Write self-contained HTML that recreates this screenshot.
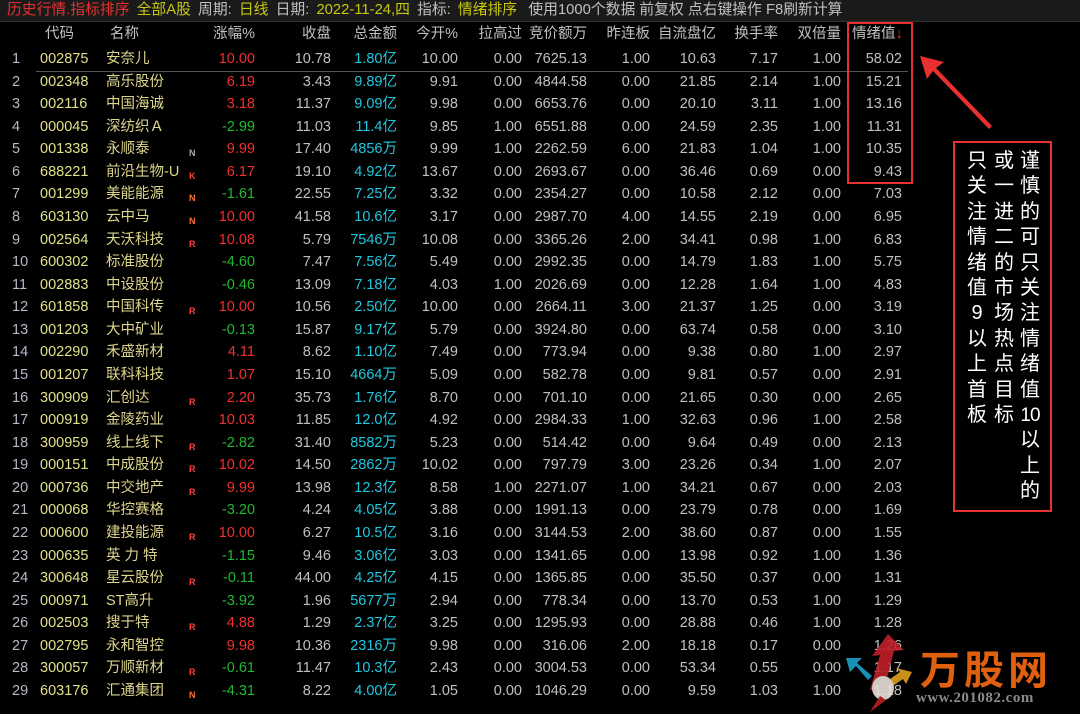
<!DOCTYPE html>
<html><head><meta charset="utf-8"><style>
body{margin:0;width:1080px;height:714px;background:#000;overflow:hidden;position:relative;font-family:"Liberation Sans","Noto Sans CJK SC",sans-serif;font-size:14.5px;color:#c0c0c0}
.tb{position:absolute;left:0;top:0;width:1080px;height:22px;background:#1a1a1a;border-bottom:1px solid #333;white-space:nowrap;line-height:21px;padding-left:7px;box-sizing:border-box;font-size:14.8px}
.tb span{margin-right:3px}
.rd{color:#e83030}.yl{color:#c8c810}
.r{position:absolute;left:0;width:1080px;height:22px;line-height:22px;white-space:nowrap}
.r span{position:absolute;top:0}
.i{left:12px;color:#b8b8c8}
.c{left:40px;color:#e0e08a}
.n{left:106px;color:#ddd58c}
.m{left:189px;font-size:9px;font-weight:bold;top:4px!important}
.mg{color:#a8a8a8}.mr{color:#ff4040}.mo{color:#ff7030}
.a{right:825px;text-align:right}
.b{right:749px;text-align:right}
.d{right:683px;text-align:right;color:#20c8e0}
.e{right:622px;text-align:right}
.f{right:558px;text-align:right}
.g{right:493px;text-align:right}
.h{right:430px;text-align:right}
.j{right:364px;text-align:right}
.k{right:302px;text-align:right}
.l{right:239px;text-align:right}
.o{right:178px;text-align:right}
.up{color:#f03030}.dn{color:#20b830}
.hd{color:#c0c0c0}
.vt{position:absolute;top:149px;width:28px;text-align:center;color:#fff;font-size:20px;line-height:25.4px}
</style></head><body>
<div class="tb"><span class="rd">历史行情.指标排序</span> <span class="yl">全部A股</span> <span>周期:</span> <span class="yl">日线</span> <span>日期:</span> <span class="yl">2022-11-24,四</span> <span>指标:</span> <span class="yl">情绪排序</span> &nbsp;<span>使用1000个数据 前复权 点右键操作 F8刷新计算</span></div>

<div class="r hd" style="top:23px"><span style="left:45px">代码</span><span style="left:110px">名称</span><span class="a">涨幅%</span><span class="b">收盘</span><span class="d" style="color:#c0c0c0">总金额</span><span class="e">今开%</span><span class="f">拉高过</span><span class="g">竞价额万</span><span class="h">昨连板</span><span class="j">自流盘亿</span><span class="k">换手率</span><span class="l">双倍量</span><span style="left:852px">情绪值<span style="position:static;color:#ff2020">↓</span></span></div>

<div style="position:absolute;left:36px;top:71px;width:872px;height:1px;background:#555"></div>

<div class="r" style="top:48px"><span class="i">1</span><span class="c">002875</span><span class="n">安奈儿</span><span class="a up">10.00</span><span class="b">10.78</span><span class="d">1.80亿</span><span class="e">10.00</span><span class="f">0.00</span><span class="g">7625.13</span><span class="h">1.00</span><span class="j">10.63</span><span class="k">7.17</span><span class="l">1.00</span><span class="o">58.02</span></div>
<div class="r" style="top:70.6px"><span class="i">2</span><span class="c">002348</span><span class="n">高乐股份</span><span class="a up">6.19</span><span class="b">3.43</span><span class="d">9.89亿</span><span class="e">9.91</span><span class="f">0.00</span><span class="g">4844.58</span><span class="h">0.00</span><span class="j">21.85</span><span class="k">2.14</span><span class="l">1.00</span><span class="o">15.21</span></div>
<div class="r" style="top:93.1px"><span class="i">3</span><span class="c">002116</span><span class="n">中国海诚</span><span class="a up">3.18</span><span class="b">11.37</span><span class="d">9.09亿</span><span class="e">9.98</span><span class="f">0.00</span><span class="g">6653.76</span><span class="h">0.00</span><span class="j">20.10</span><span class="k">3.11</span><span class="l">1.00</span><span class="o">13.16</span></div>
<div class="r" style="top:115.7px"><span class="i">4</span><span class="c">000045</span><span class="n">深纺织Ａ</span><span class="a dn">-2.99</span><span class="b">11.03</span><span class="d">11.4亿</span><span class="e">9.85</span><span class="f">1.00</span><span class="g">6551.88</span><span class="h">0.00</span><span class="j">24.59</span><span class="k">2.35</span><span class="l">1.00</span><span class="o">11.31</span></div>
<div class="r" style="top:138.3px"><span class="i">5</span><span class="c">001338</span><span class="n">永顺泰</span><span class="m mg">N</span><span class="a up">9.99</span><span class="b">17.40</span><span class="d">4856万</span><span class="e">9.99</span><span class="f">1.00</span><span class="g">2262.59</span><span class="h">6.00</span><span class="j">21.83</span><span class="k">1.04</span><span class="l">1.00</span><span class="o">10.35</span></div>
<div class="r" style="top:160.9px"><span class="i">6</span><span class="c">688221</span><span class="n">前沿生物-U</span><span class="m mr">K</span><span class="a up">6.17</span><span class="b">19.10</span><span class="d">4.92亿</span><span class="e">13.67</span><span class="f">0.00</span><span class="g">2693.67</span><span class="h">0.00</span><span class="j">36.46</span><span class="k">0.69</span><span class="l">0.00</span><span class="o">9.43</span></div>
<div class="r" style="top:183.4px"><span class="i">7</span><span class="c">001299</span><span class="n">美能能源</span><span class="m mo">N</span><span class="a dn">-1.61</span><span class="b">22.55</span><span class="d">7.25亿</span><span class="e">3.32</span><span class="f">0.00</span><span class="g">2354.27</span><span class="h">0.00</span><span class="j">10.58</span><span class="k">2.12</span><span class="l">0.00</span><span class="o">7.03</span></div>
<div class="r" style="top:206px"><span class="i">8</span><span class="c">603130</span><span class="n">云中马</span><span class="m mo">N</span><span class="a up">10.00</span><span class="b">41.58</span><span class="d">10.6亿</span><span class="e">3.17</span><span class="f">0.00</span><span class="g">2987.70</span><span class="h">4.00</span><span class="j">14.55</span><span class="k">2.19</span><span class="l">0.00</span><span class="o">6.95</span></div>
<div class="r" style="top:228.6px"><span class="i">9</span><span class="c">002564</span><span class="n">天沃科技</span><span class="m mr">R</span><span class="a up">10.08</span><span class="b">5.79</span><span class="d">7546万</span><span class="e">10.08</span><span class="f">0.00</span><span class="g">3365.26</span><span class="h">2.00</span><span class="j">34.41</span><span class="k">0.98</span><span class="l">1.00</span><span class="o">6.83</span></div>
<div class="r" style="top:251.1px"><span class="i">10</span><span class="c">600302</span><span class="n">标准股份</span><span class="a dn">-4.60</span><span class="b">7.47</span><span class="d">7.56亿</span><span class="e">5.49</span><span class="f">0.00</span><span class="g">2992.35</span><span class="h">0.00</span><span class="j">14.79</span><span class="k">1.83</span><span class="l">1.00</span><span class="o">5.75</span></div>
<div class="r" style="top:273.7px"><span class="i">11</span><span class="c">002883</span><span class="n">中设股份</span><span class="a dn">-0.46</span><span class="b">13.09</span><span class="d">7.18亿</span><span class="e">4.03</span><span class="f">1.00</span><span class="g">2026.69</span><span class="h">0.00</span><span class="j">12.28</span><span class="k">1.64</span><span class="l">1.00</span><span class="o">4.83</span></div>
<div class="r" style="top:296.3px"><span class="i">12</span><span class="c">601858</span><span class="n">中国科传</span><span class="m mr">R</span><span class="a up">10.00</span><span class="b">10.56</span><span class="d">2.50亿</span><span class="e">10.00</span><span class="f">0.00</span><span class="g">2664.11</span><span class="h">3.00</span><span class="j">21.37</span><span class="k">1.25</span><span class="l">0.00</span><span class="o">3.19</span></div>
<div class="r" style="top:318.8px"><span class="i">13</span><span class="c">001203</span><span class="n">大中矿业</span><span class="a dn">-0.13</span><span class="b">15.87</span><span class="d">9.17亿</span><span class="e">5.79</span><span class="f">0.00</span><span class="g">3924.80</span><span class="h">0.00</span><span class="j">63.74</span><span class="k">0.58</span><span class="l">0.00</span><span class="o">3.10</span></div>
<div class="r" style="top:341.4px"><span class="i">14</span><span class="c">002290</span><span class="n">禾盛新材</span><span class="a up">4.11</span><span class="b">8.62</span><span class="d">1.10亿</span><span class="e">7.49</span><span class="f">0.00</span><span class="g">773.94</span><span class="h">0.00</span><span class="j">9.38</span><span class="k">0.80</span><span class="l">1.00</span><span class="o">2.97</span></div>
<div class="r" style="top:364px"><span class="i">15</span><span class="c">001207</span><span class="n">联科科技</span><span class="a up">1.07</span><span class="b">15.10</span><span class="d">4664万</span><span class="e">5.09</span><span class="f">0.00</span><span class="g">582.78</span><span class="h">0.00</span><span class="j">9.81</span><span class="k">0.57</span><span class="l">0.00</span><span class="o">2.91</span></div>
<div class="r" style="top:386.6px"><span class="i">16</span><span class="c">300909</span><span class="n">汇创达</span><span class="m mr">R</span><span class="a up">2.20</span><span class="b">35.73</span><span class="d">1.76亿</span><span class="e">8.70</span><span class="f">0.00</span><span class="g">701.10</span><span class="h">0.00</span><span class="j">21.65</span><span class="k">0.30</span><span class="l">0.00</span><span class="o">2.65</span></div>
<div class="r" style="top:409.1px"><span class="i">17</span><span class="c">000919</span><span class="n">金陵药业</span><span class="a up">10.03</span><span class="b">11.85</span><span class="d">12.0亿</span><span class="e">4.92</span><span class="f">0.00</span><span class="g">2984.33</span><span class="h">1.00</span><span class="j">32.63</span><span class="k">0.96</span><span class="l">1.00</span><span class="o">2.58</span></div>
<div class="r" style="top:431.7px"><span class="i">18</span><span class="c">300959</span><span class="n">线上线下</span><span class="m mr">R</span><span class="a dn">-2.82</span><span class="b">31.40</span><span class="d">8582万</span><span class="e">5.23</span><span class="f">0.00</span><span class="g">514.42</span><span class="h">0.00</span><span class="j">9.64</span><span class="k">0.49</span><span class="l">0.00</span><span class="o">2.13</span></div>
<div class="r" style="top:454.3px"><span class="i">19</span><span class="c">000151</span><span class="n">中成股份</span><span class="m mr">R</span><span class="a up">10.02</span><span class="b">14.50</span><span class="d">2862万</span><span class="e">10.02</span><span class="f">0.00</span><span class="g">797.79</span><span class="h">3.00</span><span class="j">23.26</span><span class="k">0.34</span><span class="l">1.00</span><span class="o">2.07</span></div>
<div class="r" style="top:476.8px"><span class="i">20</span><span class="c">000736</span><span class="n">中交地产</span><span class="m mr">R</span><span class="a up">9.99</span><span class="b">13.98</span><span class="d">12.3亿</span><span class="e">8.58</span><span class="f">1.00</span><span class="g">2271.07</span><span class="h">1.00</span><span class="j">34.21</span><span class="k">0.67</span><span class="l">0.00</span><span class="o">2.03</span></div>
<div class="r" style="top:499.4px"><span class="i">21</span><span class="c">000068</span><span class="n">华控赛格</span><span class="a dn">-3.20</span><span class="b">4.24</span><span class="d">4.05亿</span><span class="e">3.88</span><span class="f">0.00</span><span class="g">1991.13</span><span class="h">0.00</span><span class="j">23.79</span><span class="k">0.78</span><span class="l">0.00</span><span class="o">1.69</span></div>
<div class="r" style="top:522px"><span class="i">22</span><span class="c">000600</span><span class="n">建投能源</span><span class="m mr">R</span><span class="a up">10.00</span><span class="b">6.27</span><span class="d">10.5亿</span><span class="e">3.16</span><span class="f">0.00</span><span class="g">3144.53</span><span class="h">2.00</span><span class="j">38.60</span><span class="k">0.87</span><span class="l">0.00</span><span class="o">1.55</span></div>
<div class="r" style="top:544.5px"><span class="i">23</span><span class="c">000635</span><span class="n">英 力 特</span><span class="a dn">-1.15</span><span class="b">9.46</span><span class="d">3.06亿</span><span class="e">3.03</span><span class="f">0.00</span><span class="g">1341.65</span><span class="h">0.00</span><span class="j">13.98</span><span class="k">0.92</span><span class="l">1.00</span><span class="o">1.36</span></div>
<div class="r" style="top:567.1px"><span class="i">24</span><span class="c">300648</span><span class="n">星云股份</span><span class="m mr">R</span><span class="a dn">-0.11</span><span class="b">44.00</span><span class="d">4.25亿</span><span class="e">4.15</span><span class="f">0.00</span><span class="g">1365.85</span><span class="h">0.00</span><span class="j">35.50</span><span class="k">0.37</span><span class="l">0.00</span><span class="o">1.31</span></div>
<div class="r" style="top:589.7px"><span class="i">25</span><span class="c">000971</span><span class="n">ST高升</span><span class="a dn">-3.92</span><span class="b">1.96</span><span class="d">5677万</span><span class="e">2.94</span><span class="f">0.00</span><span class="g">778.34</span><span class="h">0.00</span><span class="j">13.70</span><span class="k">0.53</span><span class="l">1.00</span><span class="o">1.29</span></div>
<div class="r" style="top:612.3px"><span class="i">26</span><span class="c">002503</span><span class="n">搜于特</span><span class="m mr">R</span><span class="a up">4.88</span><span class="b">1.29</span><span class="d">2.37亿</span><span class="e">3.25</span><span class="f">0.00</span><span class="g">1295.93</span><span class="h">0.00</span><span class="j">28.88</span><span class="k">0.46</span><span class="l">1.00</span><span class="o">1.28</span></div>
<div class="r" style="top:634.8px"><span class="i">27</span><span class="c">002795</span><span class="n">永和智控</span><span class="a up">9.98</span><span class="b">10.36</span><span class="d">2316万</span><span class="e">9.98</span><span class="f">0.00</span><span class="g">316.06</span><span class="h">2.00</span><span class="j">18.18</span><span class="k">0.17</span><span class="l">0.00</span><span class="o">1.26</span></div>
<div class="r" style="top:657.4px"><span class="i">28</span><span class="c">300057</span><span class="n">万顺新材</span><span class="m mr">R</span><span class="a dn">-0.61</span><span class="b">11.47</span><span class="d">10.3亿</span><span class="e">2.43</span><span class="f">0.00</span><span class="g">3004.53</span><span class="h">0.00</span><span class="j">53.34</span><span class="k">0.55</span><span class="l">0.00</span><span class="o">1.17</span></div>
<div class="r" style="top:680px"><span class="i">29</span><span class="c">603176</span><span class="n">汇通集团</span><span class="m mo">N</span><span class="a dn">-4.31</span><span class="b">8.22</span><span class="d">4.00亿</span><span class="e">1.05</span><span class="f">0.00</span><span class="g">1046.29</span><span class="h">0.00</span><span class="j">9.59</span><span class="k">1.03</span><span class="l">1.00</span><span class="o">1.18</span></div>

<div style="position:absolute;left:847px;top:22px;width:62px;height:158px;border:2px solid #e83030"></div>

<svg style="position:absolute;left:0;top:0" width="1080" height="714">
<path d="M920 56 L944 62 L936 68 L992 126 L989 129 L933 71 L927 79 Z" fill="#e83030"/>
<g opacity="0.9">
<path d="M870 690 L880 655 L872 656 L888 634 L904 650 L894 651 L884 690Z" fill="#c0202a"/>
<path d="M868 680 L856 666 L850 672 L846 658 L862 658 L857 663 L872 676Z" fill="#1ea0c8"/>
<path d="M880 686 L900 672 L896 668 L912 672 L906 684 L903 679 L884 692Z" fill="#e0a020"/>
<ellipse cx="883" cy="688" rx="11" ry="12" fill="#e8e0d8"/>
<path d="M870 712 L880 696 L886 700 Z" fill="#c02020"/>
</g>
</svg>
<div style="position:absolute;left:920px;top:645px;width:150px;font-size:40px;font-weight:bold;color:#e06010;letter-spacing:4px;line-height:44px;font-family:'Noto Sans CJK SC',sans-serif">万股网</div>
<div style="position:absolute;left:916px;top:690px;font-size:15px;font-weight:bold;color:#8a8a8a;font-family:'Liberation Serif',serif;letter-spacing:0.5px">www.201082.com</div>

<div style="position:absolute;left:953px;top:141px;width:95px;height:367px;border:2px solid #e83030"></div>
<div class="vt" style="left:1016px">谨<br>慎<br>的<br>可<br>只<br>关<br>注<br>情<br>绪<br>值<br><span style="font-size:19px;letter-spacing:-1px">10</span><br>以<br>上<br>的</div>
<div class="vt" style="left:990px">或<br>一<br>进<br>二<br>的<br>市<br>场<br>热<br>点<br>目<br>标</div>
<div class="vt" style="left:963px">只<br>关<br>注<br>情<br>绪<br>值<br>9<br>以<br>上<br>首<br>板</div>
</body></html>
